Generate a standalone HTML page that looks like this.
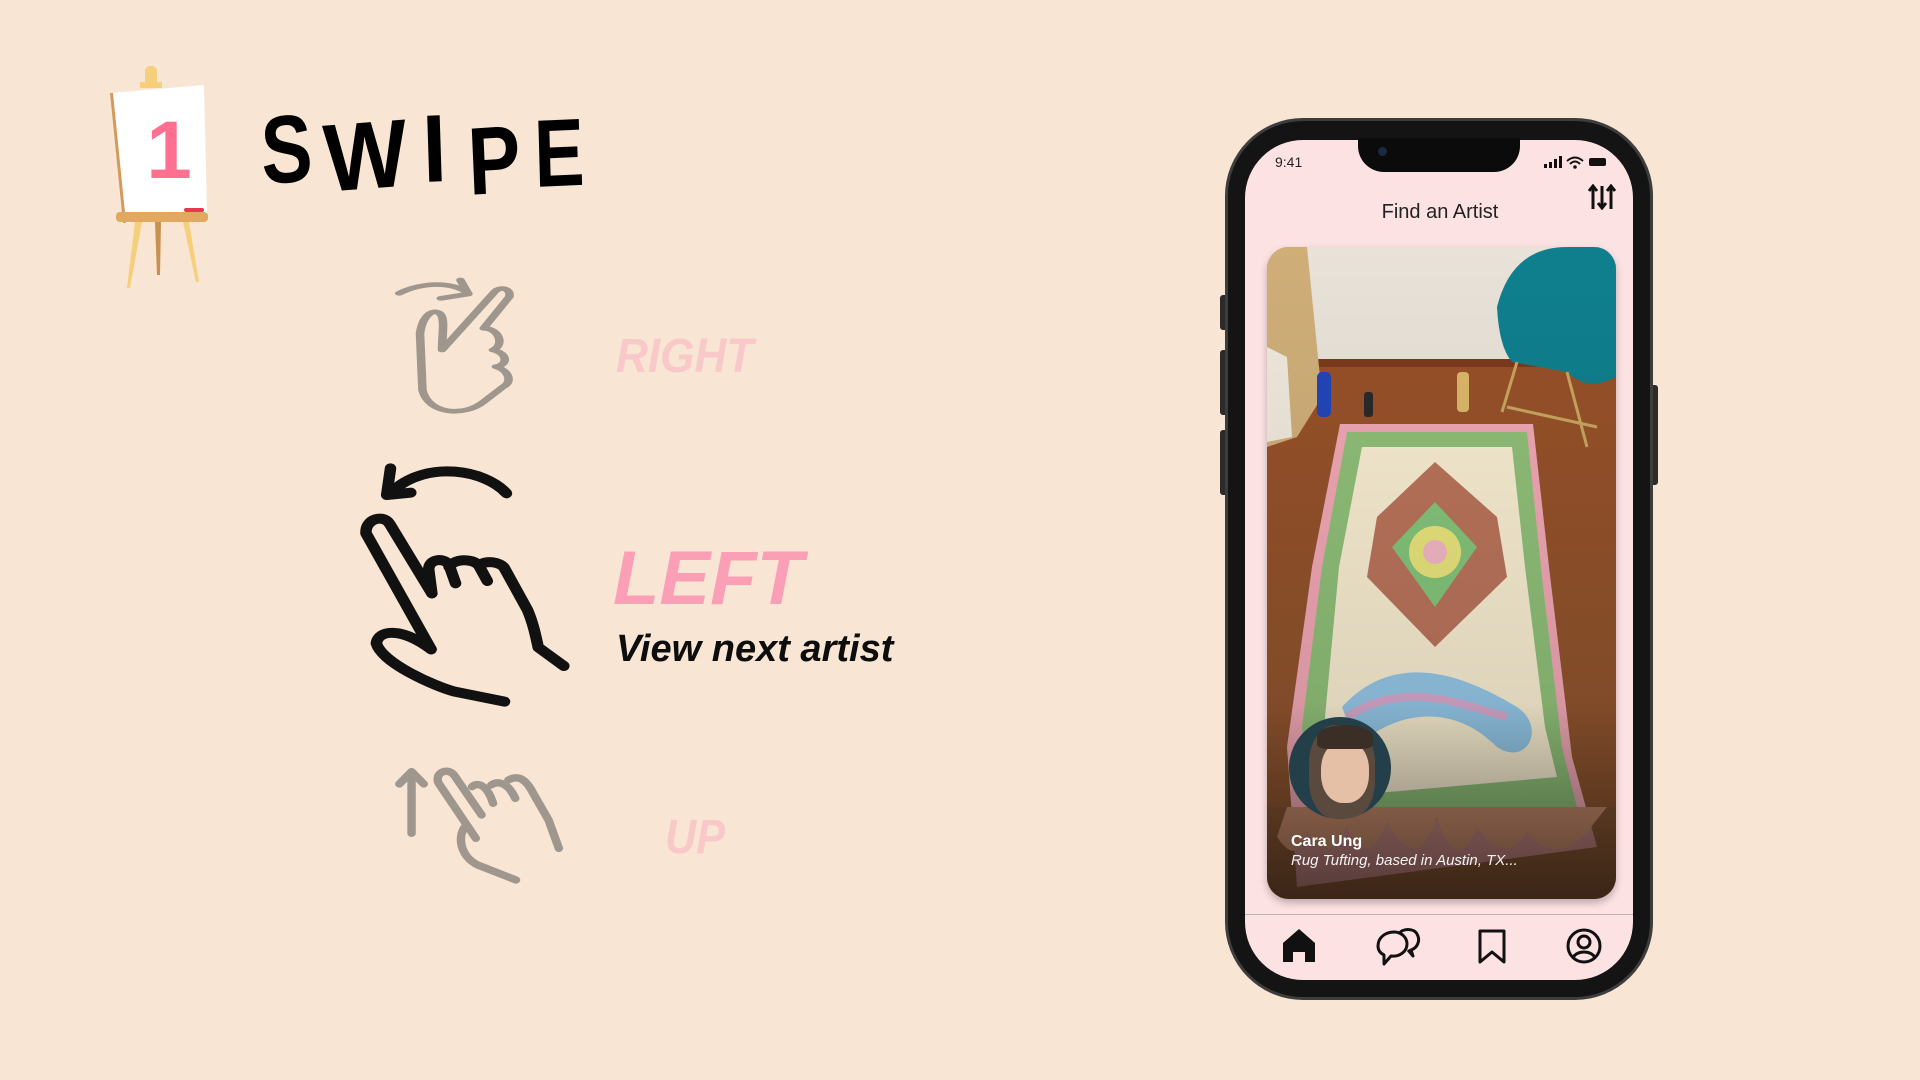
<!DOCTYPE html>
<html><head><meta charset="utf-8"><style>
*{margin:0;padding:0;box-sizing:border-box}
body{width:1920px;height:1080px;background:#f8e5d3;position:relative;overflow:hidden;font-family:"Liberation Sans",sans-serif}
.abs{position:absolute}
.sl{position:absolute;font-size:96px;font-weight:bold;color:#000;line-height:1;transform-origin:left top}
.right{left:616px;top:333px;font-size:48px;font-weight:bold;font-style:italic;color:#f9c8c8;transform:scaleX(0.92);transform-origin:left top;line-height:1}
.left{left:613px;top:541px;font-size:76px;font-weight:bold;font-style:italic;color:#fb9fb6;line-height:1}
.view{left:616px;top:630px;font-size:38px;font-weight:bold;font-style:italic;color:#0d0d0d;line-height:1}
.up{left:665px;top:814px;font-size:48px;font-weight:bold;font-style:italic;color:#f9c8c8;line-height:1;transform:scaleX(0.9);transform-origin:left top}
.phone{left:1225px;top:118px;width:428px;height:882px;border-radius:78px;background:#141414;border:3px solid #3d3d3d}
.screen{left:1245px;top:140px;width:388px;height:840px;border-radius:58px;background:#fde2e3;overflow:hidden}
.notch{left:1358px;top:138px;width:162px;height:34px;background:#0b0b0b;border-radius:0 0 26px 26px}
</style></head><body>

<!-- easel -->
<svg class="abs" style="left:60px;top:60px" width="160" height="240" viewBox="0 0 160 240">
<rect x="85" y="6" width="12" height="22" rx="5" fill="#f5cf7c"/>
<rect x="80" y="22" width="22" height="6" fill="#f5cf7c"/>
<polygon points="50,33 144,25 147,155 63,163" fill="#fff"/>
<polygon points="50,33 53,33 66,163 63,163" fill="#d49a5a"/>
<rect x="56" y="152" width="92" height="10" rx="4" fill="#e0a860"/>
<polygon points="75,162 82,162 70,228 67,228" fill="#f5cf7c"/>
<polygon points="95,162 101,162 100,215 97,215" fill="#c99050"/>
<polygon points="123,162 129,162 139,222 136,222" fill="#f5cf7c"/>
<rect x="124" y="148" width="20" height="4" rx="2" fill="#e8384f"/>
<text x="109" y="118" font-family="Liberation Sans" font-weight="bold" font-size="82" fill="#ff6f8f" text-anchor="middle">1</text>
</svg>

<div class="sl" style="left:259px;top:104px;transform:scaleX(0.8) rotate(-3deg)">S</div>
<div class="sl" style="left:321px;top:112px;transform:scaleX(0.92) rotate(-4deg)">W</div>
<div class="sl" style="left:421px;top:102px;transform:scaleX(0.9) rotate(-2deg)">I</div>
<div class="sl" style="left:466px;top:115px;transform:scaleX(0.82) rotate(-3deg)">P</div>
<div class="sl" style="left:533px;top:107px;transform:scaleX(0.78) rotate(-2deg)">E</div>

<!-- right hand (grey) -->
<svg class="abs" style="left:0;top:0" width="960" height="540" viewBox="0 0 1568 1620" preserveAspectRatio="none" fill="none" stroke="#9f978d" stroke-width="14" stroke-linecap="round" stroke-linejoin="round">
<path d="M652,880 C690,845 740,845 765,880"/>
<path d="M752,840 L765,882 L720,895"/>
<path d="M722,1050 L808,875 C815,860 835,862 832,890 L790,985 C815,985 825,1035 805,1050 C830,1060 830,1095 810,1100 C835,1115 835,1150 822,1160 L790,1205 C760,1250 700,1245 690,1170 L686,1000 C690,950 705,925 718,940 C728,955 722,1000 722,1050 Z"/>
</svg>
<div class="abs right">RIGHT</div>

<!-- left hand (black) + up hand (grey) -->
<svg class="abs" style="left:340px;top:450px" width="600" height="450" viewBox="0 0 1568 1350" preserveAspectRatio="none" fill="none" stroke-linecap="round" stroke-linejoin="round">
<g stroke="#111" stroke-width="30">
<path d="M435,130 C380,60 230,30 140,120"/>
<path d="M132,55 L122,135 L185,128"/>
<path d="M240,430 L130,222 C115,192 65,205 68,250 L238,598"/>
<path d="M238,598 C160,530 100,540 95,580 C110,640 250,710 300,725 L430,755"/>
<path d="M240,430 L232,360 C230,325 275,322 285,345 L302,400"/>
<path d="M285,350 C300,325 345,325 362,345 L385,393"/>
<path d="M365,345 C380,330 420,335 430,355 L490,480 C505,520 512,560 518,592 L585,648"/>
</g>
<g stroke="#9f978d" stroke-width="22">
<path d="M187,1150 L187,965 M155,1002 L187,965 L219,1002"/>
<path d="M355,1165 L258,1000 C245,970 280,950 298,975 L370,1095"/>
<path d="M345,1010 C360,995 385,1005 400,1060"/>
<path d="M395,1005 C415,990 440,1000 458,1045"/>
<path d="M440,990 C465,975 485,985 505,1030 L545,1110 L572,1195"/>
<path d="M328,1128 C305,1160 315,1220 360,1245 L460,1290"/>
</g>
</svg>
<div class="abs left">LEFT</div>
<div class="abs view">View next artist</div>
<div class="abs up">UP</div>

<!-- phone -->
<div class="abs" style="left:1220px;top:295px;width:8px;height:35px;background:#2b2b2b;border-radius:3px"></div>
<div class="abs" style="left:1220px;top:350px;width:8px;height:65px;background:#2b2b2b;border-radius:3px"></div>
<div class="abs" style="left:1220px;top:430px;width:8px;height:65px;background:#2b2b2b;border-radius:3px"></div>
<div class="abs" style="left:1650px;top:385px;width:8px;height:100px;background:#2b2b2b;border-radius:3px"></div>
<div class="abs phone"></div>
<div class="abs screen"></div>
<div class="abs notch"></div>
<div class="abs" style="left:1378px;top:147px;width:9px;height:9px;border-radius:50%;background:#1b2a44"></div>
<div class="abs" style="left:1275px;top:154px;font-size:14px;color:#222">9:41</div>
<svg class="abs" style="left:1543px;top:155px" width="70" height="14" viewBox="0 0 70 14">
<rect x="1" y="9" width="3" height="4" fill="#111"/><rect x="6" y="7" width="3" height="6" fill="#111"/><rect x="11" y="4" width="3" height="9" fill="#111"/><rect x="16" y="1" width="3" height="12" fill="#111"/>
<path d="M24,6 Q32,-1 40,6 M27,9 Q32,4 37,9" stroke="#111" stroke-width="2" fill="none"/><circle cx="32" cy="12" r="1.8" fill="#111"/>
<rect x="46" y="3" width="17" height="8" rx="2" fill="#111"/>
</svg>
<div class="abs" style="left:1340px;top:201px;width:200px;text-align:center;font-size:20px;color:#222">Find an Artist</div>
<svg class="abs" style="left:1588px;top:184px" width="28" height="26" viewBox="0 0 28 26" stroke="#111" stroke-width="3" fill="none">
<path d="M5,25 V3 M1,7 L5,2 L9,7"/><path d="M14,2 V24 M10,19 L14,24 L18,19"/><path d="M23,25 V3 M19,7 L23,2 L27,7"/>
</svg>

<!-- card -->
<div class="abs" style="left:1267px;top:247px;width:349px;height:652px;border-radius:22px;overflow:hidden;box-shadow:0 4px 8px rgba(0,0,0,.25);background:#a35a2e">
<svg width="349" height="652" viewBox="0 0 349 652" style="position:absolute;left:0;top:0">
<defs>
<linearGradient id="fl" x1="0" y1="0" x2="0" y2="1"><stop offset="0" stop-color="#9b4f26"/><stop offset="1" stop-color="#8a5530"/></linearGradient>
<linearGradient id="dk" x1="0" y1="0" x2="0" y2="1"><stop offset="0" stop-color="#000" stop-opacity="0"/><stop offset="0.7" stop-color="#000" stop-opacity="0.1"/><stop offset="1" stop-color="#000" stop-opacity=".55"/></linearGradient>
</defs>
<rect width="349" height="652" fill="url(#fl)"/>
<rect width="349" height="118" fill="#e8e2d8"/>
<rect y="112" width="349" height="8" fill="#7c3a1c"/>
<polygon points="0,0 40,0 55,150 30,190 0,200" fill="#cfae78"/>
<polygon points="0,100 20,110 25,190 0,195" fill="#efe8dc"/>
<path d="M230,60 Q245,0 300,0 L349,0 L349,130 Q320,145 300,125 L245,115 Q232,100 230,60Z" fill="#0f7f8e"/>
<path d="M250,115 L235,165 M300,125 L320,200 M240,160 L330,180" stroke="#c8a560" stroke-width="3"/>
<rect x="50" y="125" width="14" height="45" rx="5" fill="#2346b8"/>
<rect x="97" y="145" width="9" height="25" rx="3" fill="#2a2a2a"/>
<rect x="190" y="125" width="12" height="40" rx="4" fill="#dcb76a"/>
<polygon points="73,177 266,177 282,320 305,510 330,600 30,640 20,500 45,320" fill="#f0a7b4"/>
<polygon points="80,185 260,185 275,330 295,500 310,560 45,585 35,480 55,320" fill="#8fbf78"/>
<polygon points="95,200 245,200 258,320 278,480 290,530 65,550 58,470 72,320" fill="#f7ecd0"/>
<polygon points="168,215 230,270 240,330 168,400 100,330 110,270" fill="#b9735a"/>
<polygon points="168,255 210,300 168,360 125,300" fill="#84c47a"/>
<circle cx="168" cy="305" r="26" fill="#e8e47c"/>
<circle cx="168" cy="305" r="12" fill="#f3b7c5"/>
<path d="M75,460 C130,400 200,430 250,460 C280,480 260,520 230,500 C180,450 120,470 90,500Z" fill="#93c6e6"/>
<path d="M80,470 C140,430 200,460 240,470" stroke="#d6a8cc" stroke-width="8" fill="none"/>
<path d="M0,560 L349,560 L349,652 L0,652Z" fill="#7a5336" opacity=".45"/>
<path d="M10,590 Q30,620 40,585 Q60,620 80,580 Q100,625 120,575 Q150,630 170,570 Q190,630 210,580 Q240,620 260,585 Q290,620 320,585 L340,560 L20,560Z" fill="#c38869"/>
<rect width="349" height="652" fill="url(#dk)" y="0"/>
</svg>
<div style="position:absolute;left:22px;top:470px;width:102px;height:102px;border-radius:50%;overflow:hidden;background:#23404a">
<div style="position:absolute;left:20px;top:8px;width:66px;height:94px;border-radius:40%;background:#5a4a3e"></div>
<div style="position:absolute;left:32px;top:24px;width:48px;height:62px;border-radius:45%;background:#e5c0a6"></div>
<div style="position:absolute;left:28px;top:8px;width:56px;height:24px;border-radius:50% 50% 20% 20%;background:#3a2e26"></div>
</div>
<div style="position:absolute;left:24px;top:586px;font-size:16px;font-weight:bold;color:#fff">Cara Ung</div>
<div style="position:absolute;left:24px;top:605px;font-size:15px;font-style:italic;color:#f2f2f2">Rug Tufting, based in Austin, TX...</div>
</div>

<!-- nav -->
<div class="abs" style="left:1245px;top:914px;width:388px;height:1px;background:#bfb1b1"></div>
<svg class="abs" style="left:1280px;top:926px" width="340" height="40" viewBox="0 0 340 40">
<path d="M3,36 V17 L19,3 L35,17 V36 H25 V26 H13 V36Z" fill="#111"/>
<g fill="none" stroke="#111" stroke-width="3" stroke-linejoin="round">
<path d="M98,20 C98,11 106,6 114,6 C122,6 127,12 127,18 C127,26 119,31 111,30 L104,38 L104,29 C100,27 98,24 98,20Z"/>
<path d="M119,8 C122,2 134,2 137,8 C141,15 137,22 131,24 L133,30 L128,24"/>
<path d="M200,5 H224 V36 L212,26 L200,36Z"/>
<circle cx="304" cy="20" r="16"/><circle cx="304" cy="16" r="6"/><path d="M293,32 C296,24 312,24 315,32"/>
</g>
</svg>
</body></html>
